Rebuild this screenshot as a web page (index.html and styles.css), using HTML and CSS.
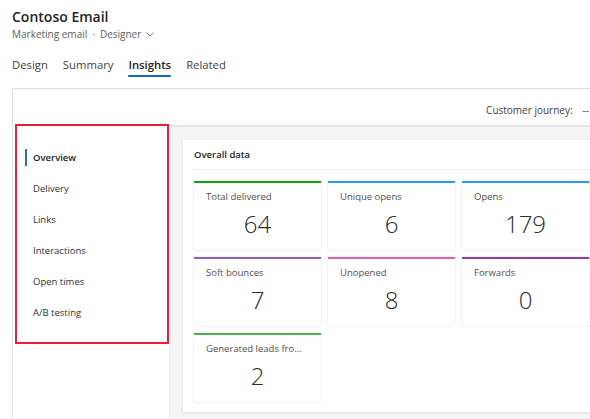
FILE: index.html
```html
<!DOCTYPE html>
<html lang="en">
  <head>
    <meta charset="UTF-8" />
    <meta name="viewport" content="width=device-width, initial-scale=1.0" />
    <title>Contoso Email - Insights</title>

    <link rel="stylesheet" href="styles.css">
  </head>
  <body>
    <!-- Record header -->
    <header class="record-header">
      <h1 class="record-title">Contoso Email</h1>
      <div class="record-sub">
        <span>Marketing email</span>
        <span class="dot">&middot;</span>
        <span>Designer</span>
        <svg class="chevron" width="8" height="5" viewBox="0 0 8 5">
          <path d="M0.5 0.5 L4 4 L7.5 0.5" fill="none" stroke="#8a8a8a" stroke-width="1" />
        </svg>
      </div>
    </header>

    <!-- Tabs -->
    <nav class="tabs">
      <a class="tab">Design</a>
      <a class="tab">Summary</a>
      <a class="tab active">Insights</a>
      <a class="tab">Related</a>
    </nav>

    <!-- Insights frame -->
    <div class="frame">
      <div class="toolbar">
        <span class="journey-label">Customer journey:</span>
        <span class="journey-value">--</span>
      </div>

      <div class="workspace">
        <aside class="sidenav">
          <ul class="sidenav-list">
            <li class="sidenav-item active">Overview</li>
            <li class="sidenav-item">Delivery</li>
            <li class="sidenav-item">Links</li>
            <li class="sidenav-item">Interactions</li>
            <li class="sidenav-item">Open times</li>
            <li class="sidenav-item">A/B testing</li>
          </ul>
          <div class="highlight"></div>
        </aside>

        <main class="main">
          <section class="card">
            <h2 class="card-title">Overall data</h2>
            <div class="tiles">
              <div class="tile green">
                <div class="tile-label">Total delivered</div>
                <div class="tile-value">64</div>
              </div>
              <div class="tile blue">
                <div class="tile-label">Unique opens</div>
                <div class="tile-value">6</div>
              </div>
              <div class="tile blue">
                <div class="tile-label">Opens</div>
                <div class="tile-value">179</div>
              </div>
              <div class="tile lavender">
                <div class="tile-label">Soft bounces</div>
                <div class="tile-value">7</div>
              </div>
              <div class="tile pink">
                <div class="tile-label">Unopened</div>
                <div class="tile-value">8</div>
              </div>
              <div class="tile purple">
                <div class="tile-label">Forwards</div>
                <div class="tile-value">0</div>
              </div>
              <div class="tile light-green">
                <div class="tile-label">Generated leads from this email</div>
                <div class="tile-value">2</div>
              </div>
            </div>
          </section>
        </main>
      </div>
    </div>
  </body>
</html>
```

FILE: styles.css
```css
    body {
      margin: 0;
      width: 590px;
      height: 419px;
      overflow: hidden;
      background: #fff;
      color: #242424;
      font-family: "Open Sans", "Noto Sans", sans-serif;
    }

    /* Record header */
    .record-header {
      padding: 6px 12px 0;
    }

    .record-title {
      margin: 0;
      font-size: 14px;
      font-weight: 600;
      line-height: 21px;
      color: #242424;
    }

    .record-sub {
      display: flex;
      align-items: center;
      font-size: 10px;
      line-height: 14px;
      color: #616161;
    }

    .record-sub .dot {
      margin: 0 5px;
    }

    .record-sub .chevron {
      margin-left: 5px;
    }

    /* Tabs */
    .tabs {
      display: flex;
      gap: 15px;
      padding: 16px 12px 0;
    }

    .tab {
      position: relative;
      padding-bottom: 6px;
      font-size: 11.3px;
      line-height: 16px;
      color: #424242;
    }

    .tab.active {
      font-weight: 600;
      color: #242424;
    }

    .tab.active::after {
      content: "";
      position: absolute;
      left: 0;
      right: 0;
      bottom: 2px;
      height: 2px;
      border-radius: 1px;
      background: #0f6cbd;
    }

    /* Insights frame */
    .frame {
      margin: 9px 0 0 12px;
      width: 600px;
      height: 340px;
      border: 1px solid #e3e3e3;
      background: #f5f5f5;
    }

    .toolbar {
      display: flex;
      justify-content: flex-end;
      align-items: center;
      box-sizing: border-box;
      height: 36px;
      padding: 5px 24px 0 0;
      background: #fff;
      box-shadow: 0 1px 2px rgba(0, 0, 0, 0.12);
      position: relative;
      font-size: 10px;
      color: #424242;
    }

    .journey-label {
      margin-right: 10px;
    }

    .workspace {
      display: flex;
      height: 304px;
    }

    /* Left navigation */
    .sidenav {
      position: relative;
      width: 156px;
      background: #fff;
      box-shadow: 1px 0 2px rgba(0, 0, 0, 0.06);
    }

    .sidenav-list {
      list-style: none;
      margin: 0;
      padding: 24px 0 0 12px;
    }

    .sidenav-item {
      box-sizing: border-box;
      height: 31px;
      padding-left: 6px;
      border-left: 2px solid transparent;
      font-size: 9.5px;
      line-height: 17px;
      color: #323130;
    }

    .sidenav-item.active {
      height: 17px;
      margin-bottom: 14px;
      font-weight: 600;
      color: #242424;
      border-left-color: #2b6cb8;
    }

    /* Red outline drawn over the navigation list */
    .highlight {
      position: absolute;
      left: 2px;
      top: -1px;
      width: 150px;
      height: 216px;
      border: 2px solid #e8203a;
    }

    /* Main content */
    .main {
      flex: 1;
      padding: 15px 0 0 14px;
    }

    .card {
      box-sizing: border-box;
      height: 272px;
      padding: 0 11px;
      background: #fff;
      box-shadow: 0 1px 3px rgba(0, 0, 0, 0.1);
    }

    .card-title {
      margin: 0 0 11px;
      padding: 8px 0 7px;
      font-size: 9.5px;
      font-weight: 600;
      line-height: 14px;
      color: #242424;
      border-bottom: 1px solid #ececec;
    }

    .tiles {
      display: grid;
      grid-template-columns: repeat(3, 127px);
      grid-auto-rows: 69px;
      gap: 7px;
    }

    .tile {
      box-sizing: border-box;
      min-width: 0;
      padding: 7px 12px 0;
      background: #fff;
      border-top: 2px solid #ccc;
      box-shadow: 0 0 2px rgba(0, 0, 0, 0.14);
    }

    .tile-label {
      font-size: 9.5px;
      line-height: 14px;
      color: #505050;
      white-space: nowrap;
      overflow: hidden;
      text-overflow: ellipsis;
    }

    .tile-value {
      margin-top: 5px;
      text-align: center;
      font-size: 24px;
      font-weight: 300;
      line-height: 30px;
      color: #2b2b2b;
    }

    .tile.green { border-top-color: #13a10e; }
    .tile.blue { border-top-color: #2899f5; }
    .tile.lavender { border-top-color: #8764b8; }
    .tile.pink { border-top-color: #e35fb0; }
    .tile.purple { border-top-color: #8b3ea0; }
    .tile.light-green { border-top-color: #4cb34c; }
```
